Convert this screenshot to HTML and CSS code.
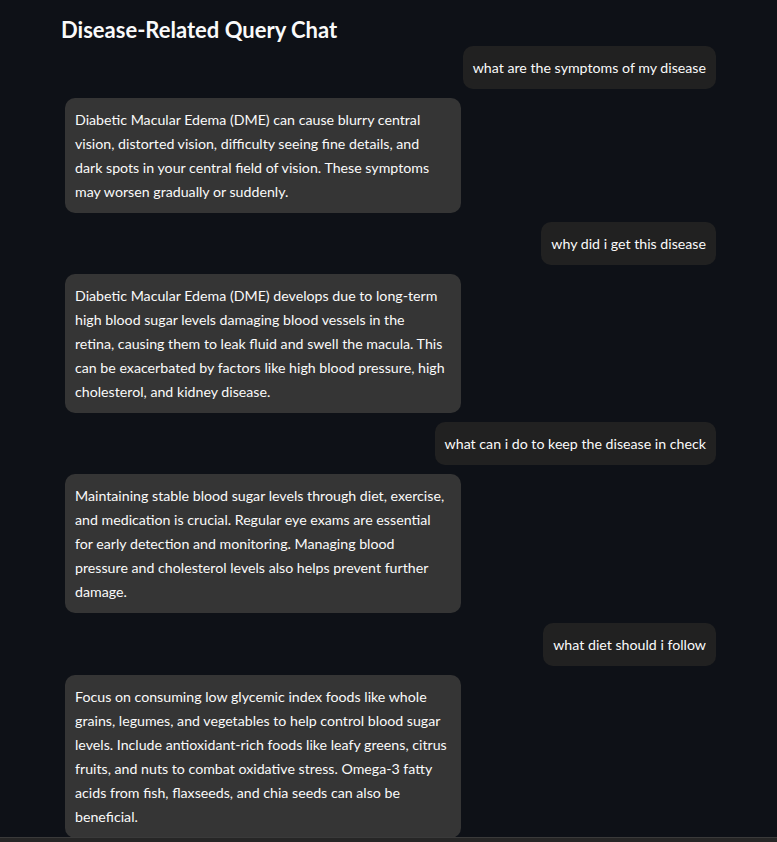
FILE: index.html
```html
<!DOCTYPE html>
<html lang="en">
<head>
<meta charset="utf-8">
<title>Disease-Related Query Chat</title>
<link rel="stylesheet" href="styles.css">
</head>
<body>
<main class="app">
  <h1 class="title">Disease-Related Query Chat</h1>
  <div class="chat">
    <div class="msg user"><p>what are the symptoms of my disease</p></div>
    <div class="msg bot"><p>Diabetic Macular Edema (DME) can cause blurry central<br>vision, distorted vision, difficulty seeing fine details, and<br>dark spots in your central field of vision. These symptoms<br>may worsen gradually or suddenly.</p></div>
    <div class="msg user"><p>why did i get this disease</p></div>
    <div class="msg bot"><p>Diabetic Macular Edema (DME) develops due to long-term<br>high blood sugar levels damaging blood vessels in the<br>retina, causing them to leak fluid and swell the macula. This<br>can be exacerbated by factors like high blood pressure, high<br>cholesterol, and kidney disease.</p></div>
    <div class="msg user"><p>what can i do to keep the disease in check</p></div>
    <div class="msg bot"><p>Maintaining stable blood sugar levels through diet, exercise,<br>and medication is crucial. Regular eye exams are essential<br>for early detection and monitoring. Managing blood<br>pressure and cholesterol levels also helps prevent further<br>damage.</p></div>
    <div class="msg user"><p>what diet should i follow</p></div>
    <div class="msg bot"><p>Focus on consuming low glycemic index foods like whole<br>grains, legumes, and vegetables to help control blood sugar<br>levels. Include antioxidant-rich foods like leafy greens, citrus<br>fruits, and nuts to combat oxidative stress. Omega-3 fatty<br>acids from fish, flaxseeds, and chia seeds can also be<br>beneficial.</p></div>
  </div>
</main>
<div class="bottom-bar"></div>
</body>
</html>
```

FILE: styles.css
```css
html, body {
  margin: 0;
  padding: 0;
  height: 100%;
  background: #0e1117;
  overflow: hidden;
}
body {
  font-family: Lato, "Liberation Sans", sans-serif;
  color: #fafafa;
  position: relative;
}
.app {
  width: 655px;
  padding: 17px 0 0 61px;
}
.title {
  margin: 0;
  font-size: 22px;
  font-weight: 700;
  line-height: 26px;
}
.chat {
  display: flex;
  flex-direction: column;
  gap: 9px;
  margin-top: 3px;
}
.msg {
  border-radius: 10px;
  padding: 10px 10px 9px;
}
.msg p {
  margin: 0;
  font-size: 14.2px;
  line-height: 24px;
  white-space: nowrap;
}
.user {
  align-self: flex-end;
  background: #212121;
}
.bot {
  align-self: flex-start;
  margin-left: 4px;
  width: 376px;
  background: #353535;
}
.bot + .user {
  margin-top: 0.2px;
}
.bottom-bar {
  position: absolute;
  left: 0;
  right: 0;
  bottom: 0;
  height: 4px;
  background: #262626;
  border-top: 1px solid #3a3a3a;
}
```
